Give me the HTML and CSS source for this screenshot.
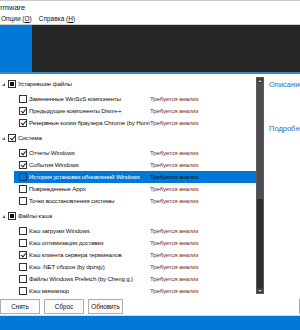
FILE: index.html
```html
<!DOCTYPE html>
<html lang="ru">
<head>
  <meta charset="UTF-8">
  <title>Dism++ Firmware</title>
  <link rel="stylesheet" href="styles.css">
</head>
<body>
  <div class="window">
    <div class="titlebar"><span class="title">Firmware</span></div>
    <div class="menubar">
      <span class="menu-item">Опции (<u>O</u>)</span>
      <span class="menu-item">Справка (<u>H</u>)</span>
    </div>
    <div class="banner">
      <div class="banner-logo"></div>
      <div class="banner-dark"></div>
    </div>

    <div class="content">
      <div class="tree">
        <div class="row group">
          <div class="name"><span class="arrow"></span><span class="box partial"></span>Устаревшие файлы</div>
        </div>
        <div class="row child">
          <div class="name"><span class="box"></span>Замененные WinSxS компоненты</div>
          <div class="status">Требуется анализ</div>
        </div>
        <div class="row child">
          <div class="name"><span class="box checked"></span>Предыдущие компоненты Dism++</div>
          <div class="status">Требуется анализ</div>
        </div>
        <div class="row child">
          <div class="name"><span class="box checked"></span><span class="label">Резервные копии браузера Chrome (by Honny)</span></div>
          <div class="status">Требуется анализ</div>
        </div>

        <div class="row group">
          <div class="name"><span class="arrow"></span><span class="box checked"></span>Система</div>
        </div>
        <div class="row child">
          <div class="name"><span class="box checked"></span>Отчеты Windows</div>
          <div class="status">Требуется анализ</div>
        </div>
        <div class="row child">
          <div class="name"><span class="box checked"></span>События Windows</div>
          <div class="status">Требуется анализ</div>
        </div>
        <div class="row child selected">
          <div class="name"><span class="box"></span>История установки обновлений Windows</div>
          <div class="status">Требуется анализ</div>
        </div>
        <div class="row child">
          <div class="name"><span class="box"></span>Поврежденные Appx</div>
          <div class="status">Требуется анализ</div>
        </div>
        <div class="row child">
          <div class="name"><span class="box"></span>Точки восстановления системы</div>
          <div class="status">Требуется анализ</div>
        </div>

        <div class="row group">
          <div class="name"><span class="arrow"></span><span class="box partial"></span>Файлы кэша</div>
        </div>
        <div class="row child">
          <div class="name"><span class="box"></span>Кэш загрузки Windows</div>
          <div class="status">Требуется анализ</div>
        </div>
        <div class="row child">
          <div class="name"><span class="box"></span>Кэш оптимизации доставки</div>
          <div class="status">Требуется анализ</div>
        </div>
        <div class="row child">
          <div class="name"><span class="box checked"></span>Кэш клиента сервера терминалов</div>
          <div class="status">Требуется анализ</div>
        </div>
        <div class="row child">
          <div class="name"><span class="box"></span>Кэш .NET сборок (by dpzsjy)</div>
          <div class="status">Требуется анализ</div>
        </div>
        <div class="row child">
          <div class="name"><span class="box"></span>Файлы Windows Prefetch (by Cheng g.)</div>
          <div class="status">Требуется анализ</div>
        </div>
        <div class="row child">
          <div class="name"><span class="box"></span>Кэш миниатюр</div>
          <div class="status">Требуется анализ</div>
        </div>
      </div>

      <div class="scrollbar">
        <div class="scroll-btn up"></div>
        <div class="scroll-thumb"></div>
        <div class="scroll-track"></div>
        <div class="scroll-btn down"></div>
      </div>

      <div class="side">
        <div class="side-title">Описание</div>
        <div class="side-title second">Подробнее</div>
      </div>
    </div>

    <div class="actions">
      <button class="btn">Снять</button>
      <button class="btn">Сброс</button>
      <button class="btn narrow">Обновить</button>
      <span class="grip"></span>
    </div>
    <div class="statusbar"></div>
  </div>
</body>
</html>
```

FILE: styles.css
```css
html, body {
  margin: 0;
  padding: 0;
  background: #ffffff;
}
body {
  font-family: "Liberation Sans", Arial, sans-serif;
  color: #111111;
  width: 300px;
  height: 330px;
  overflow: hidden;
}
.window {
  display: flex;
  flex-direction: column;
  height: 330px;
}
.titlebar {
  height: 14px;
  border-top: 1px solid #c9c9c9;
  font-size: 7.5px;
  line-height: 14px;
  overflow: hidden;
  white-space: nowrap;
}
.title {
  margin-left: -6px;
}
.menubar {
  height: 9px;
  border-bottom: 1px solid #cfcfcf;
  display: flex;
  gap: 7px;
  padding-left: 1px;
  font-size: 6.5px;
  line-height: 7px;
  white-space: nowrap;
}
.banner {
  height: 47px;
  display: flex;
  border-bottom: 2px solid #3a86c8;
}
.banner-logo {
  width: 32px;
  background: #0078d7;
}
.banner-dark {
  flex: 1;
  background: #262626;
}

/* main area: tree + scrollbar + description */
.content {
  display: flex;
  height: 221px;
}
.tree {
  width: 256px;
  padding-top: 1px;
  overflow: hidden;
  font-size: 6.2px;
  letter-spacing: -0.18px;
  white-space: nowrap;
}
.row {
  display: grid;
  grid-template-columns: 150px 1fr;
  height: 12px;
  line-height: 12px;
}
.row.group {
  height: 18px;
  line-height: 18px;
}
.row.child {
  margin-left: 14px;
  grid-template-columns: 136px 1fr;
}
.name {
  display: flex;
  align-items: center;
  overflow: hidden;
}
.label {
  overflow: hidden;
}
.row.group .name {
  padding-left: 2px;
}
.row.child .name {
  padding-left: 5px;
}
.arrow {
  width: 0;
  height: 0;
  border-left: 3px solid transparent;
  border-bottom: 3px solid #5a5a5a;
  margin-right: 3px;
  margin-top: 1px;
}
.box {
  box-sizing: border-box;
  width: 8px;
  height: 8px;
  border: 1px solid #333333;
  background: #ffffff;
  margin-right: 2px;
  flex-shrink: 0;
  position: relative;
}
.box.partial::after {
  content: "";
  position: absolute;
  left: 1px;
  top: 1px;
  width: 4px;
  height: 4px;
  background: #111111;
}
.box.checked::after {
  content: "";
  position: absolute;
  left: 2px;
  top: 0px;
  width: 2px;
  height: 4px;
  border-right: 1px solid #222222;
  border-bottom: 1px solid #222222;
  transform: rotate(40deg);
}
.status {
  color: #6e2b2b;
}
.row.selected {
  background: #0078d7;
}
.row.selected .name {
  color: #ffffff;
}
.row.selected .box {
  border-color: #1c3550;
  background: #0078d7;
}
.row.selected .status {
  color: #111111;
}

.scrollbar {
  width: 8px;
  margin-top: 3px;
  height: 217px;
  box-sizing: border-box;
  border: 1px solid #5a5a5a;
  background: #2f2f33;
  display: flex;
  flex-direction: column;
}
.scroll-btn {
  height: 5px;
  display: flex;
  justify-content: center;
  align-items: center;
  background: #3e3e42;
}
.scroll-btn.up::after,
.scroll-btn.down::after {
  content: "";
  width: 0;
  height: 0;
  border-left: 2px solid transparent;
  border-right: 2px solid transparent;
}
.scroll-btn.up::after {
  border-bottom: 2px solid #bdbdbd;
}
.scroll-btn.down::after {
  border-top: 2px solid #bdbdbd;
}
.scroll-thumb {
  height: 116px;
  background: #4d4d52;
}
.scroll-track {
  flex: 1;
}
.side {
  flex: 1;
  padding-left: 5px;
  font-size: 7.5px;
  color: #2a6cbc;
  white-space: nowrap;
  overflow: hidden;
}
.side-title {
  margin-top: 6px;
}
.side-title.second {
  margin-top: 35px;
}

.actions {
  height: 18px;
  display: flex;
  align-items: center;
  gap: 4px;
  border-bottom: 1px solid #dadada;
  margin-top: 2px;
}
.btn {
  width: 40px;
  height: 15px;
  padding: 0;
  border: 1px solid #adadad;
  background: #fbfbfb;
  font-family: "Liberation Sans", Arial, sans-serif;
  font-size: 6.3px;
  color: #111111;
}
.btn.narrow {
  width: 35px;
}
.grip {
  margin-left: auto;
  width: 1px;
  height: 15px;
  background: #a8a8a8;
}
.statusbar {
  flex: 1;
  background: #0078d7;
}
```
